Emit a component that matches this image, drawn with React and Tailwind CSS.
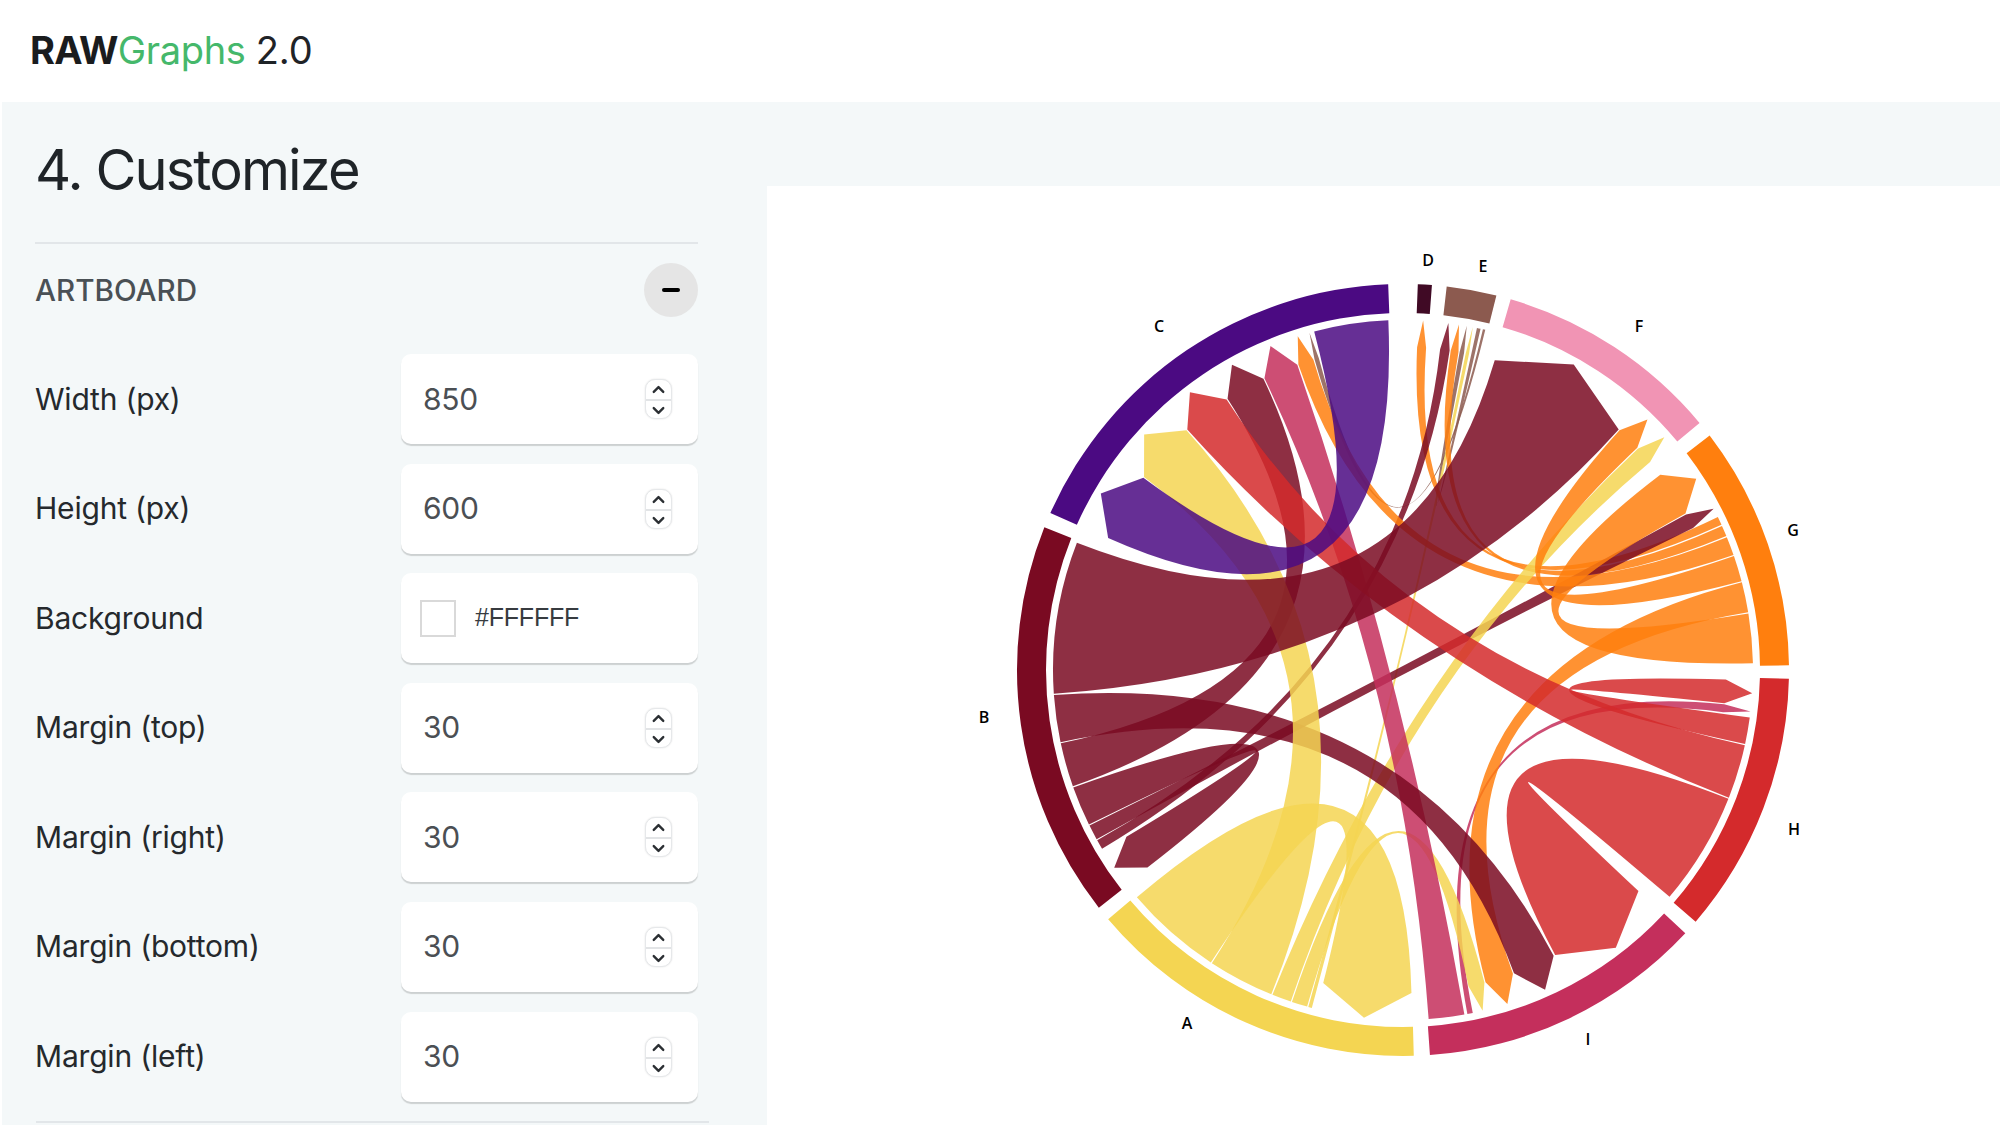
import React from 'react';
import { ChevronUp, ChevronDown } from 'lucide-react';

const CX = 1403;
const CY = 670;

const COLORS = {
    A: '#f4d552',
    B: '#7a0a22',
    C: '#4b0a82',
    D: '#400a25',
    E: '#8c5a4f',
    F: '#f194b4',
    G: '#ff7f0e',
    H: '#d42a2c',
    I: '#c42f5c',
};

const GROUPS = [
    { id: 'A', from: 178.4, to: 229.8 },
    { id: 'B', from: 232, to: 291.7 },
    { id: 'C', from: 294, to: 357.8 },
    { id: 'D', from: 2.2, to: 4.3 },
    { id: 'E', from: 6.5, to: 14 },
    { id: 'F', from: 16.2, to: 50.2 },
    { id: 'G', from: 52.6, to: 89.3 },
    { id: 'H', from: 91.3, to: 130.7 },
    { id: 'I', from: 133, to: 176 },
];

const LABELS = [
    { id: 'A', x: 1187, y: 1025 },
    { id: 'B', x: 984, y: 719 },
    { id: 'C', x: 1159, y: 328 },
    { id: 'D', x: 1428, y: 261.5 },
    { id: 'E', x: 1483, y: 267.5 },
    { id: 'F', x: 1639, y: 328 },
    { id: 'G', x: 1793, y: 532 },
    { id: 'H', x: 1794, y: 831 },
    { id: 'I', x: 1588, y: 1041 },
];

// group, source from, source to, target from, target to (degrees, clockwise from north)
const CHORDS = [
    ['A', 213.2, 229.6, 178.4, 194.4],
    ['A', 202, 213.2, 306.6, 318],
    ['A', 198.6, 202, 46.6, 50],
    ['A', 195.8, 198.6, 165.3, 168.4],
    ['A', 195, 195.8, 11.1, 11.9],
    ['B', 266, 291.4, 16.4, 42],
    ['B', 258, 266, 152.1, 160],
    ['B', 250.5, 258, 327, 334.5],
    ['B', 243.7, 250.5, 232.2, 239],
    ['B', 241, 243.7, 61.1, 64],
    ['B', 239.2, 241, 6.5, 8.4],
    ['C', 345.2, 357.7, 294, 306.6],
    ['E', 13.1, 13.7, 344, 345],
    ['E', 12.1, 12.9, 10, 11],
    ['G', 80.6, 89, 52.7, 61.1],
    ['G', 75.4, 80.6, 160, 165.3],
    ['G', 70.9, 75.4, 42, 46.6],
    ['G', 67.6, 70.9, 341, 344],
    ['G', 65.6, 67.6, 8.4, 10],
    ['G', 64, 65.6, 2.4, 4.2],
    ['H', 111.5, 130.5, 133.1, 152],
    ['H', 102.3, 111.5, 318, 327],
    ['H', 97.7, 102.3, 91.6, 96],
    ['I', 169.8, 175.9, 334.5, 341],
    ['I', 168.4, 169.5, 96, 97.6],
];

const SORTED_CHORDS = [...CHORDS].sort((a, b) => (a[2] - a[1]) - (b[2] - b[1]));

const pt = (deg, r) => {
    const a = (deg * Math.PI) / 180;
    return `${(CX + r * Math.sin(a)).toFixed(2)} ${(CY - r * Math.cos(a)).toFixed(2)}`;
};

const ringPath = (from, to) => {
    const big = to - from > 180 ? 1 : 0;
    return `M${pt(from, 386)} A386 386 0 ${big} 1 ${pt(to, 386)} L${pt(to, 357)} A357 357 0 ${big} 0 ${pt(from, 357)} Z`;
};

const chordPath = ([, s0, s1, t0, t1]) => {
    const r = 350;
    const shoulder = 323;
    const a0 = s0 + 0.1;
    const a1 = s1 - 0.1;
    const b0 = t0 + 0.1;
    const b1 = t1 - 0.1;
    return [
        `M${pt(a0, r)}`,
        `A${r} ${r} 0 0 1 ${pt(a1, r)}`,
        `Q${CX} ${CY} ${pt(b0, shoulder)}`,
        `L${pt((b0 + b1) / 2, r)}`,
        `L${pt(b1, shoulder)}`,
        `Q${CX} ${CY} ${pt(a0, r)}`,
        'Z',
    ].join(' ');
};

const ChordChart = () => (
    <svg viewBox="767 186 1233 939" className="block w-full h-full">
        {GROUPS.map(g => (
            <path key={g.id} d={ringPath(g.from, g.to)} fill={COLORS[g.id]} />
        ))}
        {SORTED_CHORDS.map((c, i) => (
            <path key={i} d={chordPath(c)} fill={COLORS[c[0]]} fillOpacity="0.85" />
        ))}
        {LABELS.map(l => (
            <text
                key={l.id}
                x={l.x}
                y={l.y}
                textAnchor="middle"
                dominantBaseline="middle"
                className="fill-black text-[16px] font-semibold font-['Open_Sans',sans-serif]"
            >
                {l.id}
            </text>
        ))}
    </svg>
);

const Spinner = () => (
    <div className="w-[27px] h-[40px] rounded-[10px] border border-[#e6e8ea] bg-white shadow-[0_0_2px_rgba(0,0,0,0.12)] flex flex-col items-center overflow-hidden">
        <div className="flex-1 w-full flex items-center justify-center border-b-2 border-[#e2e4e6]">
            <ChevronUp className="w-[19px] h-[19px] text-[#2b2f33]" strokeWidth={3} />
        </div>
        <div className="flex-1 w-full flex items-center justify-center">
            <ChevronDown className="w-[19px] h-[19px] text-[#2b2f33]" strokeWidth={3} />
        </div>
    </div>
);

const OptionRow = ({ label, value, color }) => (
    <div className="flex items-center justify-between">
        <span className="-ml-[1px] text-[30px] text-[#25292d] tracking-[-0.2px]">{label}</span>
        <div className="w-[297px] h-[90px] bg-white rounded-[10px] shadow-[0_2px_1px_rgba(0,0,0,0.16)] flex items-center">
            {color ? (
                <div className="flex items-center pl-[19px] gap-[19px]">
                    <div className="w-[36px] h-[37px] border-2 border-[#d9d9d9] bg-white" />
                    <span className="text-[25px] text-[#373b3f] font-['Liberation_Sans',sans-serif] tracking-[-0.2px]">{color}</span>
                </div>
            ) : (
                <div className="flex-1 flex items-center justify-between pl-[22px] pr-[26px]">
                    <span className="text-[30px] text-[#4b4f54] tracking-[-0.3px]">{value}</span>
                    <Spinner />
                </div>
            )}
        </div>
    </div>
);

const ROWS = [
    { label: 'Width (px)', value: '850' },
    { label: 'Height (px)', value: '600' },
    { label: 'Background', color: '#FFFFFF' },
    { label: 'Margin (top)', value: '30' },
    { label: 'Margin (right)', value: '30' },
    { label: 'Margin (bottom)', value: '30' },
    { label: 'Margin (left)', value: '30' },
];

const App = () => (
    <div className="w-[2000px] h-[1125px] overflow-hidden bg-white flex flex-col font-['Inter',sans-serif]">
        <header className="h-[102px] shrink-0 flex items-center pl-[30px] pb-[2px]">
            <span className="text-[38px] font-bold text-[#1a1c1e] tracking-[-0.8px]">RAW</span>
            <span className="text-[38px] text-[#45b86b] tracking-[-0.3px]">Graphs</span>
            <span className="text-[38px] text-[#1f2327] ml-[10px]">2.0</span>
        </header>
        <div className="flex-1 min-h-0 flex pl-[2px]">
            <aside className="w-[765px] shrink-0 bg-[#f4f8f9] pl-[34px] pr-[69px]">
                <h1 className="h-[142px] flex items-center pb-[4px] -ml-[1px] text-[56px] text-[#1f2428] tracking-[-1.9px] border-b-2 border-[#e2e6e9]">4. Customize</h1>
                <div className="h-[110px] flex items-center justify-between pb-[18px]">
                    <span className="-ml-[1px] text-[29.6px] font-medium text-[#4a5055]">ARTBOARD</span>
                    <button className="w-[54px] h-[54px] rounded-full bg-[#e5e5e5] flex items-center justify-center">
                        <span className="block w-[18px] h-[4px] rounded-[2px] bg-black" />
                    </button>
                </div>
                <div className="flex flex-col gap-[19.6px]">
                    {ROWS.map(r => (
                        <OptionRow key={r.label} label={r.label} value={r.value} color={r.color} />
                    ))}
                </div>
                <div className="mt-[19px] -mr-[11px] h-[2px] bg-[#e2e6e9]" />
            </aside>
            <main className="flex-1 min-w-0 flex flex-col bg-[#f4f8f9]">
                <div className="h-[84px] shrink-0" />
                <div className="flex-1 min-h-0 bg-white">
                    <ChordChart />
                </div>
            </main>
        </div>
    </div>
);

export default App;
